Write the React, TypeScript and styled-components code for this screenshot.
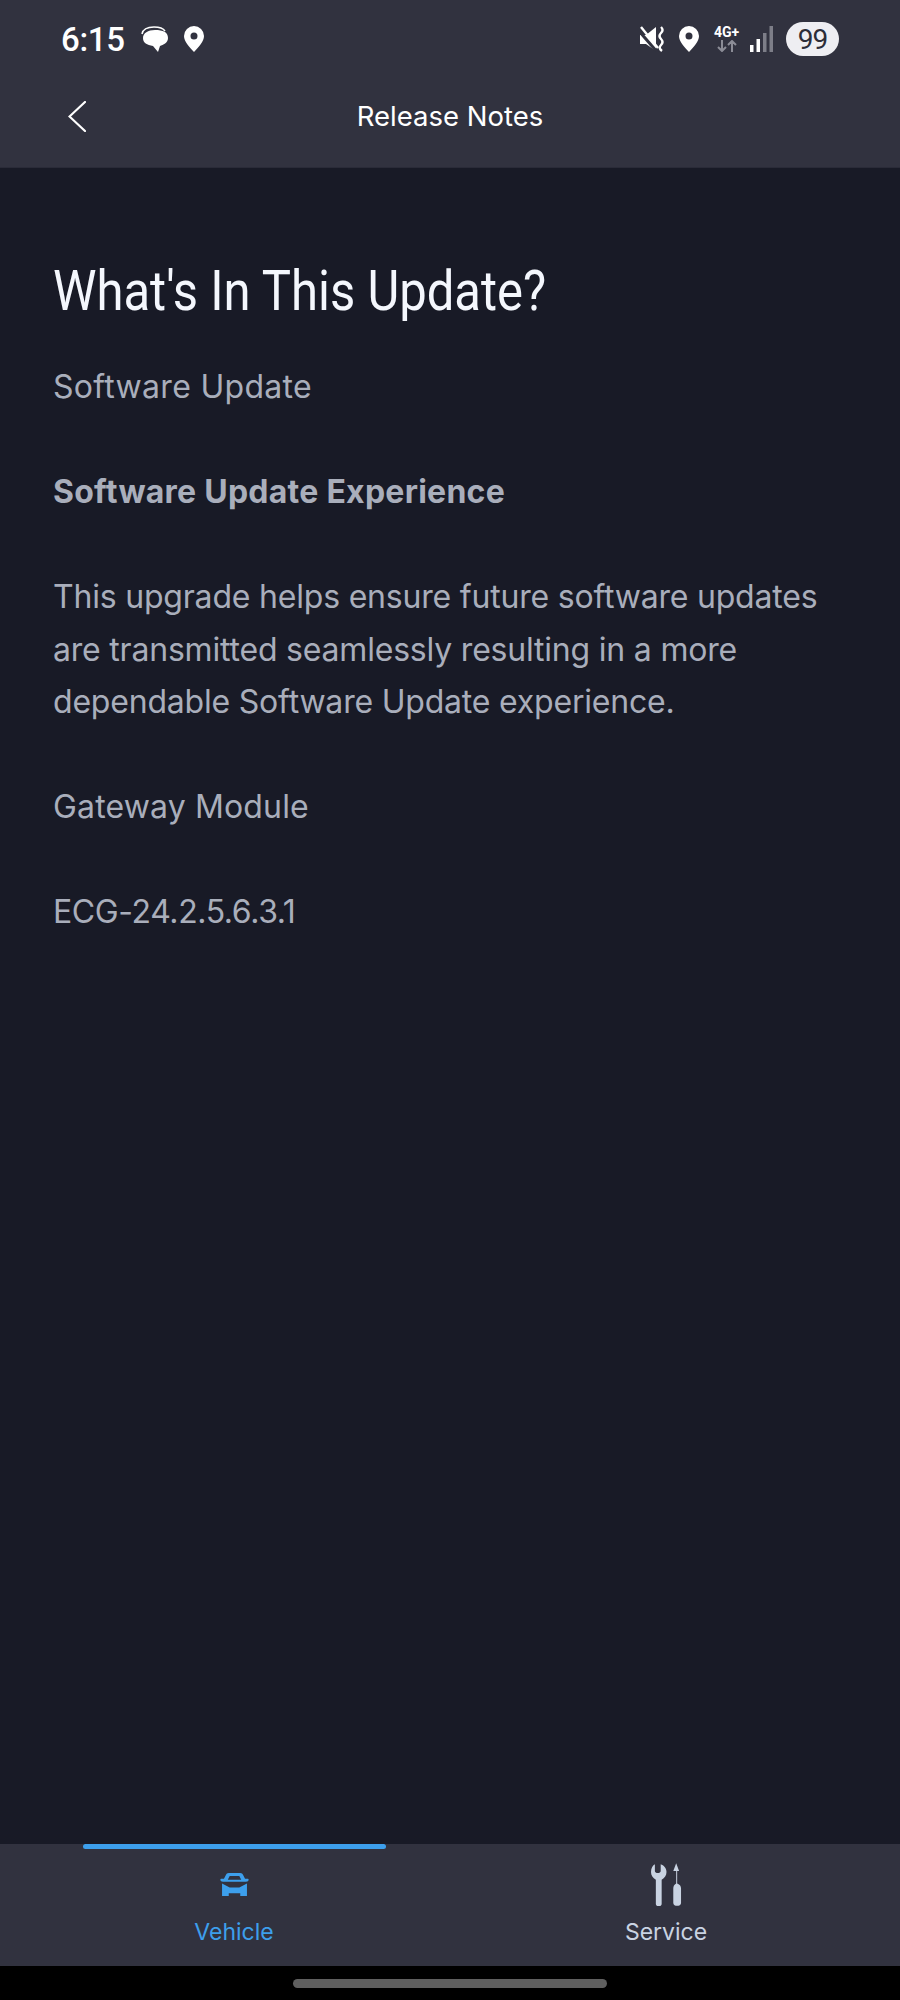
import React from 'react';
import styled, { createGlobalStyle } from 'styled-components';

const Global = createGlobalStyle`
  html, body {
    margin: 0;
    padding: 0;
    background: #000;
  }
`;

const Page = styled.div`
  width: 900px;
  height: 2000px;
  display: flex;
  flex-direction: column;
  font-family: 'Inter', 'Liberation Sans', sans-serif;
  overflow: hidden;
`;

const Header = styled.header`
  height: 168px;
  flex: none;
  background: #31323f;
  border-bottom: 1px solid #2a2b38;
  box-sizing: border-box;
  display: flex;
  flex-direction: column;
`;

const StatusBar = styled.div`
  height: 78px;
  padding: 0 61px;
  display: flex;
  align-items: center;
  justify-content: space-between;
`;

const StatusGroup = styled.div`
  display: flex;
  align-items: center;
`;

const Clock = styled.span`
  font-family: 'Roboto', sans-serif;
  font-size: 33px;
  font-weight: 500;
  color: #fff;
  letter-spacing: -0.3px;
  margin-right: 16px;
`;

const Network = styled.div`
  width: 27px;
  margin: 0 10px 0 14px;
  display: flex;
  flex-direction: column;
  align-items: center;
  gap: 2px;
`;

const NetworkLabel = styled.span`
  font-family: 'Roboto', sans-serif;
  font-size: 14px;
  line-height: 12px;
  font-weight: 700;
  color: #fff;
  white-space: nowrap;
`;

const Battery = styled.span`
  width: 53px;
  height: 34px;
  border-radius: 17px;
  background: #eeeef2;
  color: #2c2d38;
  font-family: 'Roboto', sans-serif;
  font-size: 28px;
  letter-spacing: -1px;
  display: flex;
  align-items: center;
  justify-content: center;
  margin-left: 13px;
`;

const NavRow = styled.div`
  position: relative;
  flex: 1;
  display: flex;
  align-items: center;
  justify-content: center;
  padding-bottom: 14px;
`;

const BackButton = styled.button`
  position: absolute;
  left: 68px;
  top: 23px;
  padding: 0;
  border: 0;
  background: none;
  display: flex;
`;

const NavTitle = styled.h2`
  margin: 0;
  font-size: 27.5px;
  font-weight: 400;
  color: #fff;
`;

const Content = styled.main`
  flex: 1;
  background: #181a26;
  padding: 85px 53px 0;
`;

const Title = styled.h1`
  margin: 0 0 32px;
  font-family: 'Roboto', sans-serif;
  font-size: 56px;
  line-height: 76px;
  font-weight: 400;
  color: #f4f7fd;
  transform: scaleX(0.875);
  transform-origin: left center;
  white-space: nowrap;
`;

const Body = styled.p<{ $bold?: boolean; $tracking?: number }>`
  margin: 0 0 52.5px;
  font-size: 32px;
  line-height: 52.5px;
  letter-spacing: ${p => p.$tracking ?? 0}px;
  font-weight: ${p => (p.$bold ? 700 : 400)};
  color: #a9aebb;
`;

const TabBar = styled.nav`
  height: 122px;
  flex: none;
  background: #31323f;
  display: grid;
  grid-template-columns: 1fr 1fr;
  padding: 0 18px;
`;

const Tab = styled.div<{ $active?: boolean }>`
  position: relative;
  display: flex;
  flex-direction: column;
  align-items: center;
  color: ${p => (p.$active ? '#3d9fec' : '#c9d3e2')};
  font-size: 23px;
`;

const TabIcon = styled.div`
  height: 60px;
  margin-top: 10px;
  display: flex;
  align-items: center;
`;

const TabLabel = styled.span`
  margin-top: 3px;
  line-height: 30px;
`;

const Underline = styled.div`
  position: absolute;
  top: 0;
  left: 65px;
  width: 303px;
  height: 5px;
  background: #3d9fec;
  border-radius: 3px;
`;

const GestureArea = styled.div`
  height: 34px;
  flex: none;
  background: #000;
  display: flex;
  justify-content: center;
  padding-top: 13px;
  box-sizing: border-box;
`;

const Handle = styled.div`
  width: 314px;
  height: 9px;
  border-radius: 5px;
  background: #5f5f5f;
`;

const Pin = () => (
  <svg width="20" height="26" viewBox="0 0 20 26" style={{ display: 'block' }}>
    <path fillRule="evenodd" fill="#fff" d="M10 0a10 10 0 0 1 10 10c0 5-5 11-10 16C5 21 0 15 0 10A10 10 0 0 1 10 0zm0 6.5a3.5 3.5 0 1 0 0 7 3.5 3.5 0 0 0 0-7z" />
  </svg>
);

export default function App() {
  return (
    <Page>
      <Global />
      <Header>
        <StatusBar>
          <StatusGroup>
            <Clock>6:15</Clock>
            <svg width="27" height="26" viewBox="0 0 27 26" style={{ marginRight: 16 }}>
              <path fill="none" stroke="#fff" strokeWidth="1.5" d="M1 8c1-5 6-7 12-7s9 1 11 4" />
              <path fill="#fff" d="M14 4c8 0 13 2 13 8 0 5-5 7-8 8l-2 6-5-6C6 19 2 17 2 12c0-5 5-8 12-8z" />
            </svg>
            <Pin />
          </StatusGroup>
          <StatusGroup>
            <svg width="25" height="26" viewBox="0 0 25 26" style={{ marginRight: 14 }}>
              <path fill="#fff" d="M0 9h6L16 1v24L6 18H0z" />
              <path fill="none" stroke="#31323f" strokeWidth="3" d="M-1 5l19 22" />
              <path fill="none" stroke="#fff" strokeWidth="2.4" d="M1 1l17 21" />
              <path fill="none" stroke="#fff" strokeWidth="2.4" d="M21 1q3 3 0 6t0 6 0 6 1 6" />
            </svg>
            <Pin />
            <Network>
              <NetworkLabel>4G+</NetworkLabel>
              <svg width="20" height="12" viewBox="0 0 20 12">
                <path fill="none" stroke="#8b8c96" strokeWidth="2" d="M5 0v11M1 7l4 4 4-4M15 12V1m-4 4l4-4 4 4" />
              </svg>
            </Network>
            <svg width="23" height="26" viewBox="0 0 23 26">
              <rect x="0" y="19" width="3.5" height="7" fill="#fff" />
              <rect x="6.5" y="13" width="3.5" height="13" fill="#fff" />
              <rect x="13" y="7" width="3.5" height="19" fill="#7d7e88" />
              <rect x="19.5" y="0" width="3.5" height="26" fill="#7d7e88" />
            </svg>
            <Battery>99</Battery>
          </StatusGroup>
        </StatusBar>
        <NavRow>
          <BackButton aria-label="Back">
            <svg width="18" height="31" viewBox="0 0 18 31">
              <path fill="none" stroke="#fff" strokeWidth="2.2" strokeLinecap="round" d="M17 1L1.5 15.5 17 30" />
            </svg>
          </BackButton>
          <NavTitle>Release Notes</NavTitle>
        </NavRow>
      </Header>
      <Content>
        <Title>What's In This Update?</Title>
        <Body $tracking={0.3}>Software Update</Body>
        <Body $bold $tracking={0.25}>Software Update Experience</Body>
        <Body $tracking={-0.2}>
          This upgrade helps ensure future software updates
          <br />
          are transmitted seamlessly resulting in a more
          <br />
          dependable Software Update experience.
        </Body>
        <Body $tracking={0.15}>Gateway Module</Body>
        <Body $tracking={-0.4}>ECG-24.2.5.6.3.1</Body>
      </Content>
      <TabBar>
        <Tab $active>
          <Underline />
          <TabIcon>
            <svg width="29" height="23" viewBox="0 0 30 24" fill="#3d9fec">
              <path fillRule="evenodd" d="M9 0h12c1.500 0 2.500 1 3 2l2 4h3c1 0 1 2 0 2.500L27 9H3L1 8.500C0 8 0 6 1 6h3l2-4c.5-1 1.500-2 3-2zm1 3L8 7h14l-2-4z" />
              <path d="M2 11l8 4h10l8-4v13h-7v-3H9v3H2z" />
            </svg>
          </TabIcon>
          <TabLabel>Vehicle</TabLabel>
        </Tab>
        <Tab>
          <TabIcon>
            <svg width="31" height="43" viewBox="0 0 32 44" fill="#c9d3e2">
              <path d="M4 1v7c0 1 1 2 2 2h2c1 0 2-1 2-2V1c3 1 6 4 6 8 0 4-2 6-5 8v25c0 3-6 3-6 0V17C2 15 0 13 0 9 0 5 2 2 4 1z" />
              <path d="M26 0l3 8h-2v13c3 1 4 3 4 5v15c0 4-8 4-8 0V26c0-2 1-4 3-5V8h-3z" />
            </svg>
          </TabIcon>
          <TabLabel>Service</TabLabel>
        </Tab>
      </TabBar>
      <GestureArea>
        <Handle />
      </GestureArea>
    </Page>
  );
}
